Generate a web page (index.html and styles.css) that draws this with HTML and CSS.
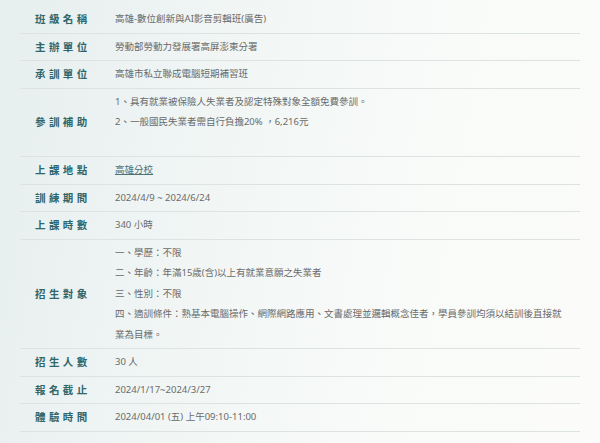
FILE: index.html
```html
<!DOCTYPE html>
<html lang="zh-Hant">
<head>
<meta charset="utf-8">
<title>課程資訊</title>
<link rel="stylesheet" href="styles.css">
</head>
<body>
<div class="page">
  <div class="table">
    <div class="row"><div class="label">班級名稱</div><div class="value">高雄-數位創新與AI影音剪輯班(廣告)</div></div>
    <div class="row"><div class="label">主辦單位</div><div class="value">勞動部勞動力發展署高屏澎東分署</div></div>
    <div class="row"><div class="label">承訓單位</div><div class="value">高雄市私立聯成電腦短期補習班</div></div>
    <div class="row"><div class="label">參訓補助</div><div class="value">1、具有就業被保險人失業者及認定特殊對象全額免費參訓。<br>2、一般國民失業者需自行負擔20% ，6,216元<br>&nbsp;</div></div>
    <div class="row"><div class="label">上課地點</div><div class="value"><a class="link" href="#">高雄分校</a></div></div>
    <div class="row"><div class="label">訓練期間</div><div class="value">2024/4/9 ~ 2024/6/24</div></div>
    <div class="row"><div class="label">上課時數</div><div class="value">340 小時</div></div>
    <div class="row"><div class="label">招生對象</div><div class="value">一、學歷：不限<br>二、年齡：年滿15歲(含)以上有就業意願之失業者<br>三、性別：不限<br>四、適訓條件：熟基本電腦操作、網際網路應用、文書處理並邏輯概念佳者，學員參訓均須以結訓後直接就業為目標。</div></div>
    <div class="row"><div class="label">招生人數</div><div class="value">30 人</div></div>
    <div class="row"><div class="label">報名截止</div><div class="value">2024/1/17~2024/3/27</div></div>
    <div class="row"><div class="label">體驗時間</div><div class="value">2024/04/01 (五) 上午09:10-11:00</div></div>
  </div>
</div>
</body>
</html>
```

FILE: styles.css
```css
html, body {
  margin: 0;
  padding: 0;
}
body {
  width: 600px;
  height: 443px;
  overflow: hidden;
  background: linear-gradient(100deg, #e6eeee 0%, #f1f6f5 35%, #f9fbf9 70%, #fbfcfa 100%);
  font-family: "Noto Sans CJK TC", "Noto Sans", sans-serif;
}
.page {
  padding: 6px 20px 0 20px;
}
.table {
  display: flex;
  flex-direction: column;
}
.row {
  display: grid;
  grid-template-columns: 95px 1fr;
  border-bottom: 1px solid #dde3e2;
  align-items: center;
}
.label {
  padding-left: 15px;
  font-size: 10.5px;
  font-weight: bold;
  letter-spacing: 3.4px;
  color: #30666a;
  line-height: 20.5px;
}
.value {
  padding: 3px 12px 3px 0;
  font-family: "Noto Sans", "Noto Sans CJK TC", sans-serif;
  font-size: 9.5px;
  line-height: 20.5px;
  color: #6a6a6a;
}
.link {
  color: #4d7276;
  text-decoration: underline;
}
```
